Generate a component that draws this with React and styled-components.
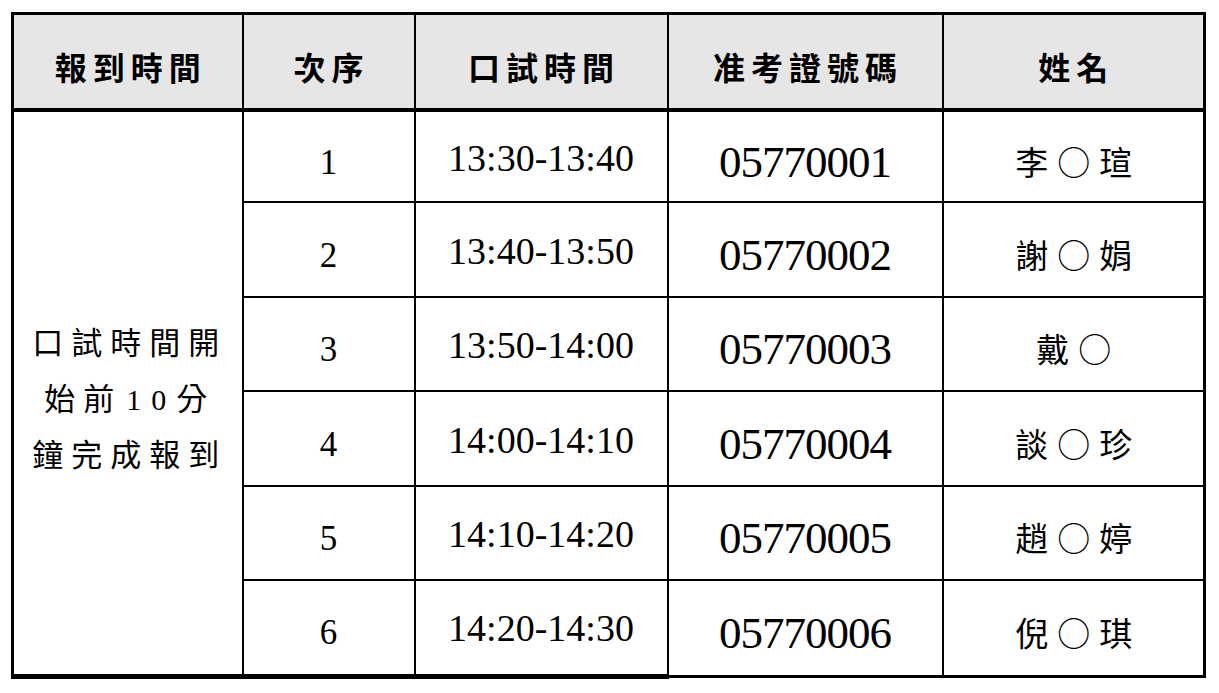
import React from 'react'
import styled, { createGlobalStyle, css } from 'styled-components'

const GlobalStyle = createGlobalStyle`
  html, body {
    margin: 0;
    background: #fff;
  }
  body {
    font-family: "Liberation Serif", "Noto Sans CJK TC", serif;
    color: #000;
  }
`

const slots = [
  { seq: 1, time: '13:30-13:40', id: '05770001', name: ['李', '瑄'] },
  { seq: 2, time: '13:40-13:50', id: '05770002', name: ['謝', '娟'] },
  { seq: 3, time: '13:50-14:00', id: '05770003', name: ['戴', ''] },
  { seq: 4, time: '14:00-14:10', id: '05770004', name: ['談', '珍'] },
  { seq: 5, time: '14:10-14:20', id: '05770005', name: ['趙', '婷'] },
  { seq: 6, time: '14:20-14:30', id: '05770006', name: ['倪', '琪'] },
]

const rowHeights = [92, 95, 94, 95, 94, 96]

const App = () => {
  return (
    <Page>
      <GlobalStyle />
      <Table>
        <colgroup>
          <col style={{ width: 230 }} />
          <col style={{ width: 172 }} />
          <col style={{ width: 253 }} />
          <col style={{ width: 275 }} />
          <col style={{ width: 262 }} />
        </colgroup>
        <thead>
          <tr>
            <HeadCell>報到時間</HeadCell>
            <HeadCell>次序</HeadCell>
            <HeadCell>口試時間</HeadCell>
            <HeadCell>准考證號碼</HeadCell>
            <HeadCell>姓名</HeadCell>
          </tr>
        </thead>
        <tbody>
          {slots.map((slot, index) => {
            const last = index === slots.length - 1
            return (
              <Row key={slot.seq} $height={rowHeights[index]}>
                {index === 0 && (
                  <NoteCell rowSpan={slots.length} $thickBottom>
                    口試時間開<br />
                    始前<Num>10</Num>分<br />
                    鐘完成報到
                  </NoteCell>
                )}
                <SeqCell $thickBottom={last}>{slot.seq}</SeqCell>
                <TimeCell $thickBottom={last}>{slot.time}</TimeCell>
                <IdCell>{slot.id}</IdCell>
                <NameCell>
                  {slot.name[0]}○{slot.name[1]}
                </NameCell>
              </Row>
            )
          })}
        </tbody>
      </Table>
    </Page>
  )
}

const Page = styled.div`
  padding: 12px 0 0 11px;
`

const Table = styled.table`
  border-collapse: collapse;
  table-layout: fixed;
  width: 1192px;
  border: 3px solid #000;
`

const HeadCell = styled.th`
  height: 84px;
  padding: 9px 0 0 6px;
  background: #e6e6e6;
  border: 2px solid #000;
  border-bottom: 4px solid #000;
  font-family: "Noto Sans CJK TC", sans-serif;
  font-weight: 700;
  font-size: 32px;
  letter-spacing: 6px;
  text-align: center;
  vertical-align: middle;
`

const Row = styled.tr`
  height: ${({ $height }) => $height}px;
`

const Cell = styled.td`
  padding: 0;
  border: 2px solid #000;
  text-align: center;
  vertical-align: middle;
  white-space: nowrap;
  ${({ $thickBottom }) =>
    $thickBottom &&
    css`
      border-bottom: 5px solid #000;
    `}
`

const NoteCell = styled(Cell)`
  padding: 14px 0 0 4px;
  font-size: 31px;
  line-height: 56px;
  letter-spacing: 8px;
`

const Num = styled.span`
  padding-left: 4px;
  font-size: 30px;
  letter-spacing: 10px;
`

const SeqCell = styled(Cell)`
  padding-top: 12px;
  font-size: 35px;
`

const TimeCell = styled(Cell)`
  padding-top: 2px;
  font-size: 38px;
`

const IdCell = styled(Cell)`
  padding-top: 10px;
  font-size: 45px;
  letter-spacing: -1px;
`

const NameCell = styled(Cell)`
  padding: 8px 0 0 10px;
  font-family: "Noto Sans CJK TC", sans-serif;
  font-size: 33px;
  letter-spacing: 9px;
`

export default App
